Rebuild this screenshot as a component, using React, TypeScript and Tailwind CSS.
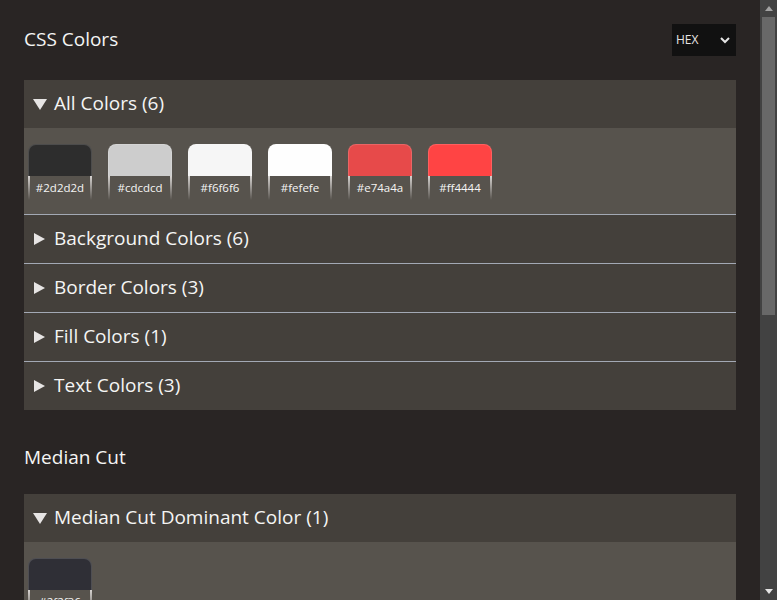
import React from 'react';

const font = "font-['Segoe_UI','Open_Sans',sans-serif]";

interface Swatch {
  hex: string;
}

const ColorSwatch: React.FC<Swatch> = ({ hex }) => {
  return (
    <div className="flex w-16 flex-col">
      <div
        className="h-8 rounded-t-lg border border-b-0 border-white/15"
        style={{ backgroundColor: hex }}
      />
      <div className="flex h-6 items-stretch">
        <div className="w-[2px] bg-gradient-to-b from-stone-300 to-transparent" />
        <span className="flex-1 pt-[5px] text-center text-[11.5px] leading-[14px] text-stone-100">{hex}</span>
        <div className="w-[2px] bg-gradient-to-b from-stone-300 to-transparent" />
      </div>
    </div>
  );
};

const Caret: React.FC<{ open?: boolean }> = ({ open }) =>
  open ? (
    <svg width="14" height="11" viewBox="0 0 14 11" className="mr-[7px] ml-[1px]">
      <path d="M0 0 L14 0 L7 11 Z" fill="#e7e5e4" />
    </svg>
  ) : (
    <svg width="12" height="12" viewBox="0 0 12 12" className="mr-[8px] ml-[2px]">
      <path d="M0 0 L11 6 L0 12 Z" fill="#e7e5e4" />
    </svg>
  );

interface GroupProps {
  label: string;
  count: number;
  open?: boolean;
  colors?: string[];
  first?: boolean;
}

const Group: React.FC<GroupProps> = ({ label, count, open, colors = [], first }) => {
  return (
    <div className={first ? '' : 'border-t border-[#a3a9b4]'}>
      <div className="flex h-12 items-center bg-stone-700 px-2 text-[19px] text-stone-100">
        <Caret open={open} />
        <span className="-mt-[2px]">
          {label} ({count})
        </span>
      </div>
      {open && (
        <div className="flex gap-4 bg-stone-600 px-1 pt-4 pb-[14px]">
          {colors.map((c) => (
            <ColorSwatch key={c} hex={c} />
          ))}
        </div>
      )}
    </div>
  );
};

const Scrollbar: React.FC = () => (
  <div className="flex h-[600px] w-[17px] flex-col bg-[#424242]">
    <div className="flex h-[17px] items-center justify-center">
      <svg width="8" height="5" viewBox="0 0 8 5">
        <path d="M4 0 L8 5 L0 5 Z" fill="#a3a3a3" />
      </svg>
    </div>
    <div className="mx-[2px] h-[298px] bg-[#686868]" />
    <div className="flex-1" />
    <div className="flex h-[17px] items-center justify-center">
      <svg width="8" height="5" viewBox="0 0 8 5">
        <path d="M0 0 L8 0 L4 5 Z" fill="#e5e5e5" />
      </svg>
    </div>
  </div>
);

export default function App() {
  return (
    <div className={`flex h-[600px] w-[777px] overflow-hidden bg-stone-800 ${font}`}>
      <div className="h-[600px] flex-1 overflow-hidden px-6 pt-6">
        <div className="flex h-8 items-center justify-between">
          <h1 className="-mt-[2px] text-[19px] text-stone-100">CSS Colors</h1>
          <div className="flex h-8 w-16 items-center justify-between bg-[#111111] pr-[6px] pl-1 text-[12px] text-stone-200">
            <span>HEX</span>
            <svg width="10" height="7" viewBox="0 0 10 7">
              <path d="M1 1 L5 5 L9 1" fill="none" stroke="#e5e5e5" strokeWidth="2" />
            </svg>
          </div>
        </div>

        <div className="mt-6">
          <Group
            first
            open
            label="All Colors"
            count={6}
            colors={['#2d2d2d', '#cdcdcd', '#f6f6f6', '#fefefe', '#e74a4a', '#ff4444']}
          />
          <Group label="Background Colors" count={6} />
          <Group label="Border Colors" count={3} />
          <Group label="Fill Colors" count={1} />
          <Group label="Text Colors" count={3} />
        </div>

        <div className="mt-[31px] flex h-8 items-center">
          <h2 className="text-[19px] text-stone-100">Median Cut</h2>
        </div>

        <div className="mt-[21px]">
          <Group first open label="Median Cut Dominant Color" count={1} colors={['#2f2f36']} />
        </div>
      </div>
      <Scrollbar />
    </div>
  );
}
